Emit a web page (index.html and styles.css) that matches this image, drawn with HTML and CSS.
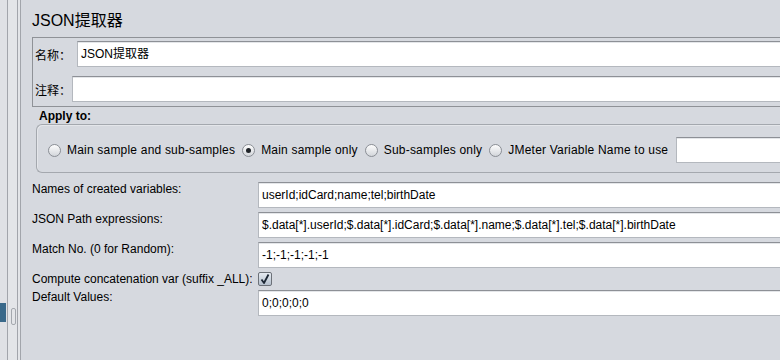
FILE: index.html
```html
<!DOCTYPE html>
<html lang="zh">
  <head>
    <meta charset="UTF-8" />
    <title>JSON提取器</title>
    <link rel="stylesheet" href="styles.css">
  </head>
  <body>
    <div class="window">
      <div class="tree">
        <div class="tree-selected"></div>
      </div>
      <div class="splitter">
        <div class="grip"></div>
      </div>
      <div class="gutter"></div>

      <div class="main">
        <div class="title">JSON提取器</div>

        <div class="name-box">
          <div class="name-row">
            <span class="cn-label label-name">名称：</span>
            <div class="field">JSON提取器</div>
          </div>
          <div class="name-row">
            <span class="cn-label label-comment">注释：</span>
            <div class="field"></div>
          </div>
        </div>

        <div class="apply-title">Apply to:</div>
        <div class="apply-group">
          <div class="option"><span class="radio"></span>Main sample and sub-samples</div>
          <div class="option"><span class="radio radio-on"></span>Main sample only</div>
          <div class="option"><span class="radio"></span>Sub-samples only</div>
          <div class="option"><span class="radio"></span>JMeter Variable Name to use</div>
          <div class="field var-field"></div>
        </div>

        <div class="props">
          <div class="prop-label">Names of created variables:</div>
          <div class="field">userId;idCard;name;tel;birthDate</div>

          <div class="prop-label">JSON Path expressions:</div>
          <div class="field">$.data[*].userId;$.data[*].idCard;$.data[*].name;$.data[*].tel;$.data[*].birthDate</div>

          <div class="prop-label">Match No. (0 for Random):</div>
          <div class="field">-1;-1;-1;-1;-1</div>

          <div class="prop-label">Compute concatenation var (suffix _ALL):</div>
          <div class="check-cell">
            <span class="checkbox">
              <svg width="12" height="12" viewBox="0 0 12 12">
                <path d="M2.5 6.5 L5 10 L9.5 1.5" fill="none" stroke="#1b2633" stroke-width="1.8" stroke-linejoin="round" />
              </svg>
            </span>
          </div>

          <div class="prop-label">Default Values:</div>
          <div class="field">0;0;0;0;0</div>
        </div>
      </div>
    </div>
  </body>
</html>
```

FILE: styles.css
```css
* {
  margin: 0;
  padding: 0;
  box-sizing: border-box;
}

body {
  width: 780px;
  height: 360px;
  overflow: hidden;
  background: #d6d9df;
  font-family: "Liberation Sans", Arial, "Noto Sans CJK SC", sans-serif;
  font-size: 12px;
  color: #111;
}

.window {
  display: flex;
  width: 820px;
  height: 360px;
}

/* left tree pane edge */
.tree {
  width: 7px;
  background: #dfe1e5;
}

.tree-selected {
  margin-top: 303px;
  width: 6px;
  height: 19px;
  background: #39698a;
}

.splitter {
  width: 11px;
  border-left: 1px solid #a2a5ab;
  border-right: 1px solid #a2a5ab;
  background: #e3e5e8;
}

.grip {
  margin: 308px 0 0 3px;
  width: 5px;
  height: 17px;
  border: 1px solid #a4a8ae;
  border-radius: 2px;
}

.gutter {
  width: 3px;
  background: #e3e5e8;
  border-right: 1px solid #a2a5ab;
}

.main {
  flex: 1;
  padding-left: 11px;
}

.title {
  margin-top: 11px;
  margin-bottom: 6px;
  font-size: 16px;
  line-height: 20px;
  color: #000;
}

/* name / comment box */
.name-box {
  display: flex;
  flex-direction: column;
  gap: 9px;
  padding: 3px 0 4px 2px;
  border: 1px solid #8f9297;
  border-right: none;
}

.name-row {
  display: flex;
  align-items: center;
}

.cn-label {
  font-family: "Noto Sans CJK SC", sans-serif;
  font-size: 12px;
  color: #000;
}

.label-name {
  margin-right: 6px;
}

.label-comment {
  margin-right: 1px;
}

.field {
  flex: 1;
  height: 26px;
  padding: 0 3px;
  line-height: 24px;
  white-space: nowrap;
  overflow: hidden;
  background: #fff;
  border: 1px solid #b4b8be;
  border-top-color: #8d9096;
  box-shadow: inset 0 1px 0 #e4e6e9;
  color: #000;
}

/* apply to */
.apply-title {
  margin-top: 2px;
  margin-bottom: 1px;
  padding-left: 7px;
  font-weight: bold;
  line-height: 14px;
  color: #000;
}

.apply-group {
  display: flex;
  align-items: center;
  margin-left: 4px;
  padding: 12px 0 9px 11px;
  border: 1px solid #a4a8ae;
  border-right: none;
  border-radius: 6px 0 0 6px;
  box-shadow: inset 1px 1px 0 rgba(255, 255, 255, 0.35);
}

.option {
  display: flex;
  align-items: center;
  gap: 6px;
  margin-right: 7px;
  line-height: 14px;
  letter-spacing: 0.2px;
  color: #000;
}

.radio {
  position: relative;
  width: 13px;
  height: 13px;
  border: 1px solid #8a8e95;
  border-radius: 50%;
  background: linear-gradient(#fdfdfd, #d3d6db);
}

.radio-on::after {
  content: "";
  position: absolute;
  left: 3px;
  top: 3px;
  width: 5px;
  height: 5px;
  border-radius: 50%;
  background: #1f2328;
}

.var-field {
  margin-left: 1px;
}

/* extractor properties */
.props {
  display: grid;
  grid-template-columns: 226px 1fr;
  row-gap: 4px;
  margin-top: 9px;
}

.prop-label {
  line-height: 14px;
  color: #000;
}

.check-cell {
  height: 14px;
}

.checkbox {
  display: flex;
  align-items: center;
  justify-content: center;
  width: 14px;
  height: 14px;
  border: 1px solid #6c7178;
  border-radius: 2px;
  background: linear-gradient(#e6ebf1, #b5c0cd);
}
```
